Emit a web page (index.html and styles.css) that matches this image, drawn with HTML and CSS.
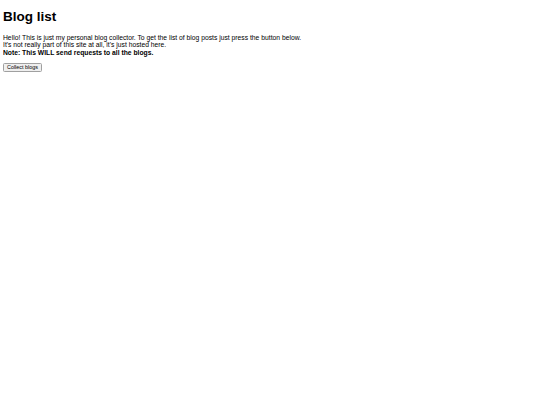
FILE: index.html
```html
<!DOCTYPE html>
<html>
<head>
<meta charset="utf-8">
<link rel="stylesheet" href="styles.css">
</head>
<body>
<h1 class="title">Blog list</h1>
<p class="intro">Hello! This is just my personal blog collector. To get the list of blog posts just press the button below.<br>It's not really part of this site at all, it's just hosted here.<br><strong>Note: This WILL send requests to all the blogs.</strong></p>
<button class="collect">Collect blogs</button>
</body>
</html>
```
FILE: styles.css
```css
body {
  margin: 3px;
  font-family: "Liberation Sans", Arial, sans-serif;
  font-size: 6.75px;
  color: #000;
  background: #fff;
}
.title {
  font-size: 13.5px;
  font-weight: bold;
  margin: 6px 0 9.8px;
}
.intro {
  margin: 0 0 6.3px;
  line-height: 7.6px;
}
.collect {
  font-family: "Liberation Sans", Arial, sans-serif;
  font-size: 5.4px;
  line-height: 6px;
  padding: 0.5px 3px;
  color: #000;
  background: #efefef;
  border: 1px solid #a0a0a0;
  border-radius: 1.5px;
}
```
